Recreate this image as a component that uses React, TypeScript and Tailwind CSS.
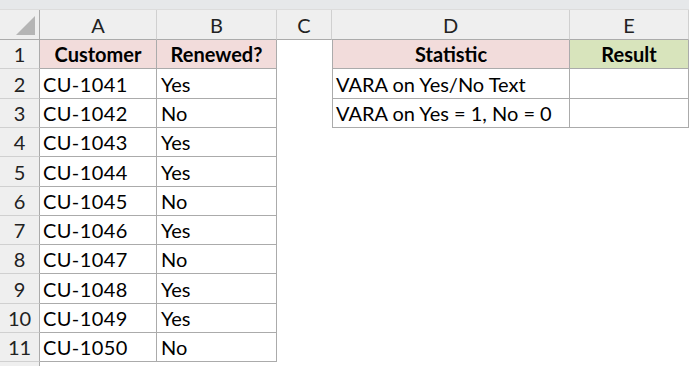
import React from "react";

const rowHeights = [29, 30, 29, 29, 30, 29, 29, 29, 30, 29, 29];
const data: [string, string][] = [
  ["CU-1041", "Yes"],
  ["CU-1042", "No"],
  ["CU-1043", "Yes"],
  ["CU-1044", "Yes"],
  ["CU-1045", "No"],
  ["CU-1046", "Yes"],
  ["CU-1047", "No"],
  ["CU-1048", "Yes"],
  ["CU-1049", "Yes"],
  ["CU-1050", "No"],
];

const font = { fontFamily: "Lato, 'Open Sans', sans-serif" };

export default function App() {
  const cols = "40px 117px 120px 55px 238px 119px";
  return (
    <div className="w-[689px] h-[366px] overflow-hidden bg-white text-black leading-[20px]" style={font}>
      <div className="h-[10px] bg-[#e6e8ea] border-b border-[#dcdcdc]" />
      <div className="grid" style={{ gridTemplateColumns: cols }}>
        <div className="relative h-[30px] bg-[#efefef] border-r border-b border-[#ababab]">
          <div className="absolute right-[4px] bottom-[4px] w-0 h-0 border-l-[19px] border-l-transparent border-b-[19px] border-b-[#b5b5b5]" />
        </div>
        {["A", "B", "C", "D", "E"].map((c) => (
          <div
            key={c}
            className="h-[30px] bg-[#efefef] border-r border-[#d0d0d0] border-b border-b-[#ababab] flex items-center justify-center text-[20px] text-[#222]"
          >
            {c}
          </div>
        ))}
        {rowHeights.map((h, i) => {
          const r = i + 1;
          const rowHead = (
            <div
              key={`h${r}`}
              className="bg-[#efefef] border-r border-r-[#ababab] border-b border-b-[#d0d0d0] flex items-center justify-center text-[20px] text-[#222] overflow-hidden"
              style={{ height: h }}
            >
              {r}
            </div>
          );
          let a: React.ReactNode, b: React.ReactNode;
          if (r === 1) {
            a = (
              <div key={`a${r}`} className="bg-[#f2dcdb] border-r border-b border-[#ababab] flex items-center justify-center font-bold text-[20px]">
                Customer
              </div>
            );
            b = (
              <div key={`b${r}`} className="bg-[#f2dcdb] border-r border-b border-[#ababab] flex items-center justify-center font-bold text-[20px]">
                Renewed?
              </div>
            );
          } else {
            const [cu, yn] = data[r - 2];
            a = (
              <div key={`a${r}`} className="border-r border-b border-[#ababab] flex items-center pl-[3px] text-[20px] tracking-[0.4px]">
                {cu}
              </div>
            );
            b = (
              <div key={`b${r}`} className="border-r border-b border-[#ababab] flex items-center pl-[4px] text-[20px]">
                {yn}
              </div>
            );
          }
          const c = <div key={`c${r}`} />;
          let d: React.ReactNode, e: React.ReactNode;
          if (r === 1) {
            d = (
              <div key={`d${r}`} className="bg-[#f2dcdb] border-l border-r border-b border-[#ababab] flex items-center justify-center font-bold text-[20px]">
                Statistic
              </div>
            );
            e = (
              <div key={`e${r}`} className="bg-[#d8e4bc] border-r border-b border-[#ababab] flex items-center justify-center font-bold text-[20px]">
                Result
              </div>
            );
          } else if (r === 2 || r === 3) {
            d = (
              <div key={`d${r}`} className="border-l border-r border-b border-[#ababab] flex items-center pl-[3px] text-[20px]">
                {r === 2 ? "VARA on Yes/No Text" : "VARA on Yes = 1, No = 0"}
              </div>
            );
            e = <div key={`e${r}`} className="border-r border-b border-[#ababab]" />;
          } else {
            d = <div key={`d${r}`} />;
            e = <div key={`e${r}`} />;
          }
          return (
            <React.Fragment key={r}>
              {rowHead}
              {a}
              {b}
              {c}
              {d}
              {e}
            </React.Fragment>
          );
        })}
        <div className="h-[30px] bg-[#efefef] border-r border-r-[#ababab]" />
      </div>
    </div>
  );
}
